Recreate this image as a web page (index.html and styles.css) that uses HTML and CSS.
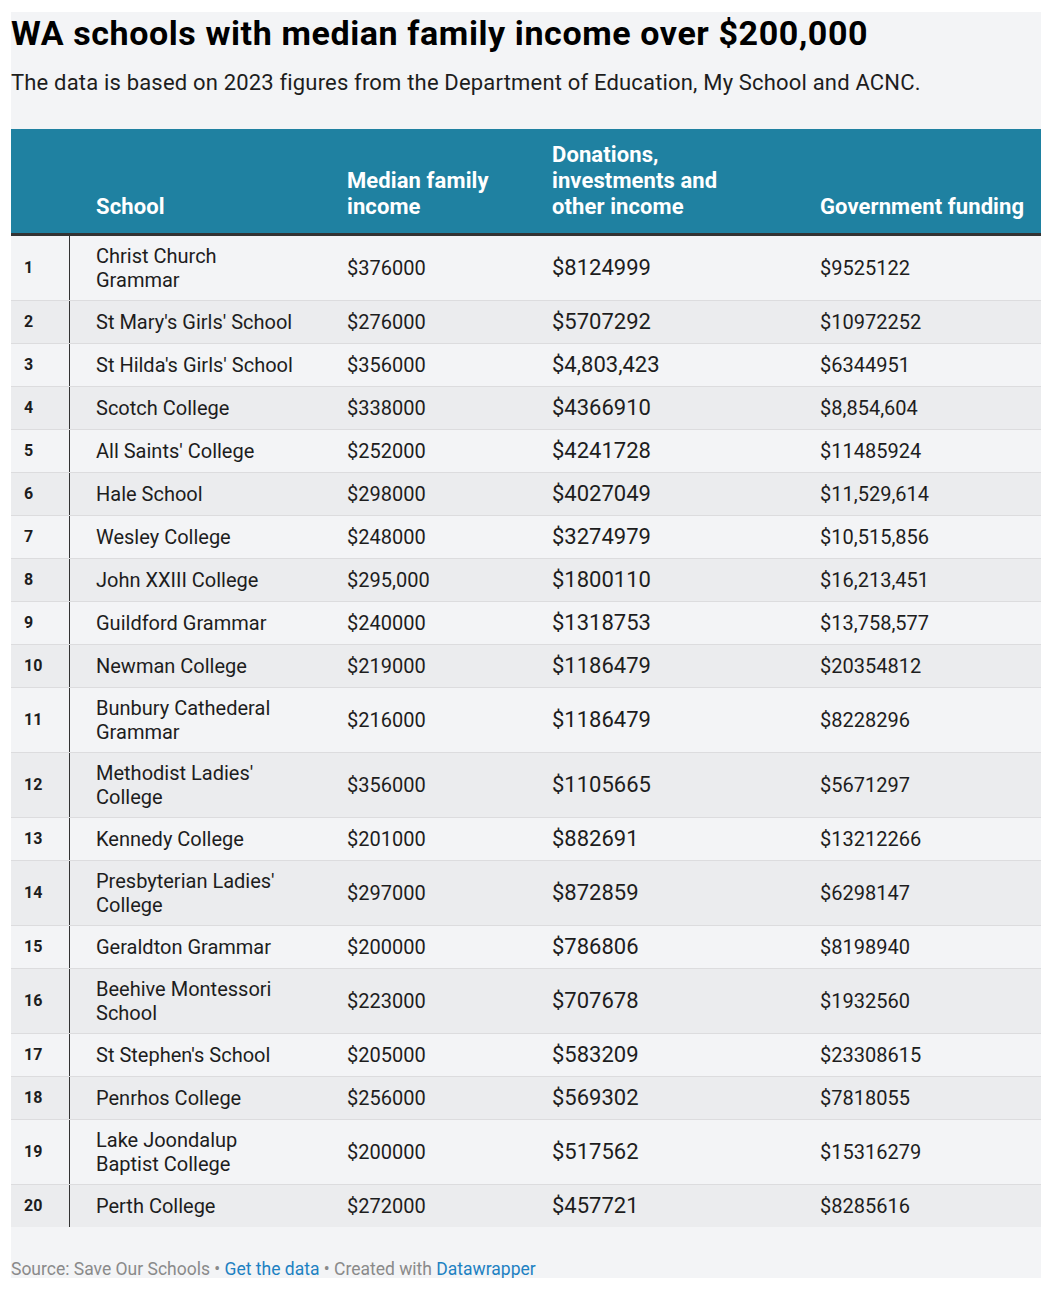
FILE: index.html
```html
<!DOCTYPE html>
<html lang="en">
<head>
<meta charset="utf-8">
<title>WA schools with median family income over $200,000</title>
<link rel="stylesheet" href="styles.css">
</head>
<body>
<div class="chart">
  <h1 class="title">WA schools with median family income over $200,000</h1>
  <p class="subtitle">The data is based on 2023 figures from the Department of Education, My School and ACNC.</p>
  <div class="table">
    <div class="row head">
      <div class="cell rank"></div>
      <div class="cell school">School</div>
      <div class="cell median">Median family income</div>
      <div class="cell don">Donations, investments and other income</div>
      <div class="cell gov">Government funding</div>
    </div>
    <div class="row"><div class="cell rank">1</div><div class="cell school">Christ Church Grammar</div><div class="cell median">$376000</div><div class="cell don">$8124999</div><div class="cell gov">$9525122</div></div>
    <div class="row"><div class="cell rank">2</div><div class="cell school">St Mary's Girls' School</div><div class="cell median">$276000</div><div class="cell don">$5707292</div><div class="cell gov">$10972252</div></div>
    <div class="row"><div class="cell rank">3</div><div class="cell school">St Hilda's Girls' School</div><div class="cell median">$356000</div><div class="cell don">$4,803,423</div><div class="cell gov">$6344951</div></div>
    <div class="row"><div class="cell rank">4</div><div class="cell school">Scotch College</div><div class="cell median">$338000</div><div class="cell don">$4366910</div><div class="cell gov">$8,854,604</div></div>
    <div class="row"><div class="cell rank">5</div><div class="cell school">All Saints' College</div><div class="cell median">$252000</div><div class="cell don">$4241728</div><div class="cell gov">$11485924</div></div>
    <div class="row"><div class="cell rank">6</div><div class="cell school">Hale School</div><div class="cell median">$298000</div><div class="cell don">$4027049</div><div class="cell gov">$11,529,614</div></div>
    <div class="row"><div class="cell rank">7</div><div class="cell school">Wesley College</div><div class="cell median">$248000</div><div class="cell don">$3274979</div><div class="cell gov">$10,515,856</div></div>
    <div class="row"><div class="cell rank">8</div><div class="cell school">John XXIII College</div><div class="cell median">$295,000</div><div class="cell don">$1800110</div><div class="cell gov">$16,213,451</div></div>
    <div class="row"><div class="cell rank">9</div><div class="cell school">Guildford Grammar</div><div class="cell median">$240000</div><div class="cell don">$1318753</div><div class="cell gov">$13,758,577</div></div>
    <div class="row"><div class="cell rank">10</div><div class="cell school">Newman College</div><div class="cell median">$219000</div><div class="cell don">$1186479</div><div class="cell gov">$20354812</div></div>
    <div class="row"><div class="cell rank">11</div><div class="cell school">Bunbury Cathederal Grammar</div><div class="cell median">$216000</div><div class="cell don">$1186479</div><div class="cell gov">$8228296</div></div>
    <div class="row"><div class="cell rank">12</div><div class="cell school">Methodist Ladies' College</div><div class="cell median">$356000</div><div class="cell don">$1105665</div><div class="cell gov">$5671297</div></div>
    <div class="row"><div class="cell rank">13</div><div class="cell school">Kennedy College</div><div class="cell median">$201000</div><div class="cell don">$882691</div><div class="cell gov">$13212266</div></div>
    <div class="row"><div class="cell rank">14</div><div class="cell school">Presbyterian Ladies' College</div><div class="cell median">$297000</div><div class="cell don">$872859</div><div class="cell gov">$6298147</div></div>
    <div class="row"><div class="cell rank">15</div><div class="cell school">Geraldton Grammar</div><div class="cell median">$200000</div><div class="cell don">$786806</div><div class="cell gov">$8198940</div></div>
    <div class="row"><div class="cell rank">16</div><div class="cell school">Beehive Montessori School</div><div class="cell median">$223000</div><div class="cell don">$707678</div><div class="cell gov">$1932560</div></div>
    <div class="row"><div class="cell rank">17</div><div class="cell school">St Stephen's School</div><div class="cell median">$205000</div><div class="cell don">$583209</div><div class="cell gov">$23308615</div></div>
    <div class="row"><div class="cell rank">18</div><div class="cell school">Penrhos College</div><div class="cell median">$256000</div><div class="cell don">$569302</div><div class="cell gov">$7818055</div></div>
    <div class="row"><div class="cell rank">19</div><div class="cell school">Lake Joondalup Baptist College</div><div class="cell median">$200000</div><div class="cell don">$517562</div><div class="cell gov">$15316279</div></div>
    <div class="row"><div class="cell rank">20</div><div class="cell school">Perth College</div><div class="cell median">$272000</div><div class="cell don">$457721</div><div class="cell gov">$8285616</div></div>
  </div>
  <p class="footer">Source: Save Our Schools • <a href="#">Get the data</a> • Created with <a href="#">Datawrapper</a></p>
</div>
</body>
</html>
```

FILE: styles.css
```css
html, body {
  margin: 0;
  padding: 0;
  background: #ffffff;
}
body {
  padding: 12px 11px 0 11px;
  font-family: Roboto, "Liberation Sans", Arial, sans-serif;
  color: #1d1d1d;
}
.chart {
  width: 1030px;
  height: 1266px;
  background: #f3f4f6;
  display: flex;
  flex-direction: column;
}
.title {
  margin: 1px 0 0 0;
  font-size: 34px;
  line-height: 40px;
  font-weight: 700;
  color: #000;
  letter-spacing: 0.6px;
  white-space: nowrap;
}
.subtitle {
  margin: 16px 0 0 0;
  font-size: 22px;
  line-height: 28px;
  letter-spacing: 0.18px;
  color: #1d1d1d;
  white-space: nowrap;
}
.table {
  margin-top: 32px;
  display: flex;
  flex-direction: column;
}
.row {
  display: grid;
  grid-template-columns: 59px 264px 205px 268px 234px;
  border-top: 1px solid #dcdcde;
  background: #f3f4f6;
}
.row:nth-child(odd) {
  background: #ebecee;
}
.row.head {
  background: #1f81a1;
  border-top: 0;
  border-bottom: 3px solid #333333;
}
.row.head + .row {
  border-top: 0;
}
.cell {
  display: flex;
  align-items: center;
  padding: 8px 12px 8px 13px;
  font-size: 20px;
  line-height: 24px;
}
.head .cell {
  align-items: flex-end;
  color: #ffffff;
  font-weight: 700;
  font-size: 22px;
  line-height: 26px;
  letter-spacing: 0.1px;
  padding-top: 13px;
  padding-bottom: 13px;
}
.cell.rank {
  font-weight: 700;
  font-size: 16px;
  border-right: 1px solid #333333;
}
.head .cell.rank {
  border-right: 0;
}
.cell.school {
  padding-left: 26px;
  padding-right: 34px;
}
.cell.don {
  font-size: 22px;
  line-height: 26px;
}
.head .cell.don {
  padding-right: 70px;
}
.head .cell.median {
  padding-right: 20px;
}
.cell.gov {
  padding-right: 6px;
}
.footer {
  margin: auto 0 0 0;
  font-size: 17.5px;
  line-height: 18px;
  color: #8a8a8a;
  white-space: nowrap;
}
.footer a {
  color: #1d81c2;
  text-decoration: none;
}
```
